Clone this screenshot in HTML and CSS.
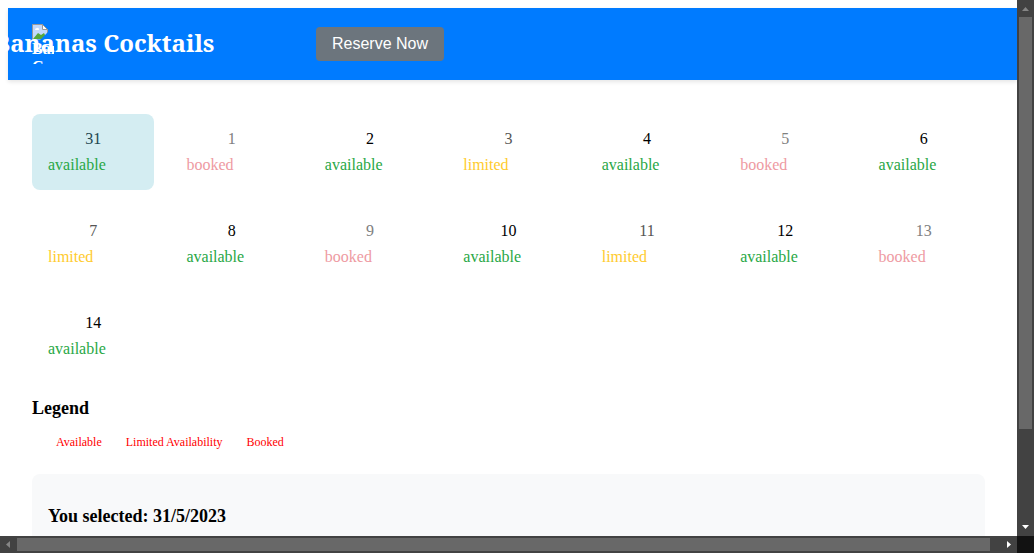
FILE: index.html
```html
<!DOCTYPE html>
<html lang="en">
<head>
<meta charset="utf-8">
<title>Bananas Cocktails</title>
<link rel="stylesheet" href="styles.css">
</head>
<body>
<div class="window">
  <div class="page">
    <header class="header">
      <div class="logo">
        <svg class="logo-icon" width="16" height="16" viewBox="0 0 16 16" aria-hidden="true">
          <path d="M.5.5h10l5 5v10H.5z" fill="#c3d9fb"/>
          <path d="M1 15l5-6 3 2 3-2 3 6z" fill="#55a83a"/>
          <path d="M3 6q0-2 2-2 2-1 2 2z" fill="#fff"/>
          <path d="M.5 15.5V.5h10l5 5v10" fill="none" stroke="#999"/>
          <path d="M10.500.5v5h5z" fill="#fff" stroke="#999"/>
          <path d="M8 16l8-8v8z" fill="#007bff"/>
        </svg>
        <span class="logo-alt">Bananas Cocktails</span>
      </div>
      <h1 class="title">Bananas Cocktails</h1>
      <button class="reserve" type="button">Reserve Now</button>
    </header>
    <main class="content">
      <div class="calendar">
        <div class="day selected"><span class="number">31</span><span class="status available">available</span></div>
        <div class="day is-booked"><span class="number">1</span><span class="status booked">booked</span></div>
        <div class="day"><span class="number">2</span><span class="status available">available</span></div>
        <div class="day is-limited"><span class="number">3</span><span class="status limited">limited</span></div>
        <div class="day"><span class="number">4</span><span class="status available">available</span></div>
        <div class="day is-booked"><span class="number">5</span><span class="status booked">booked</span></div>
        <div class="day"><span class="number">6</span><span class="status available">available</span></div>
        <div class="day is-limited"><span class="number">7</span><span class="status limited">limited</span></div>
        <div class="day"><span class="number">8</span><span class="status available">available</span></div>
        <div class="day is-booked"><span class="number">9</span><span class="status booked">booked</span></div>
        <div class="day"><span class="number">10</span><span class="status available">available</span></div>
        <div class="day is-limited"><span class="number">11</span><span class="status limited">limited</span></div>
        <div class="day"><span class="number">12</span><span class="status available">available</span></div>
        <div class="day is-booked"><span class="number">13</span><span class="status booked">booked</span></div>
        <div class="day"><span class="number">14</span><span class="status available">available</span></div>
      </div>
      <h3 class="heading">Legend</h3>
      <ul class="legend">
        <li>Available</li>
        <li>Limited Availability</li>
        <li>Booked</li>
      </ul>
      <section class="selection">
        <h3 class="heading">You selected: 31/5/2023</h3>
      </section>
    </main>
  </div>
  <div class="bar vertical" aria-hidden="true">
    <svg width="17" height="17" viewBox="0 0 17 17"><path d="M5 11h7L8.500 7z" fill="#858585"/></svg>
    <div class="track"><div class="thumb"></div></div>
    <svg width="17" height="17" viewBox="0 0 17 17"><path d="M5 6h7L8.500 10z" fill="#fff"/></svg>
  </div>
  <div class="bar horizontal" aria-hidden="true">
    <svg width="17" height="17" viewBox="0 0 17 17"><path d="M10 5v7L6 8.500z" fill="#858585"/></svg>
    <div class="track"><div class="thumb"></div></div>
    <svg width="17" height="17" viewBox="0 0 17 17"><path d="M7 5v7l4-3.500z" fill="#fff"/></svg>
  </div>
  <div class="corner"></div>
</div>
</body>
</html>
```
FILE: styles.css
```css
* { box-sizing: border-box; }
body {
  margin: 0;
  font-family: "Liberation Serif", "Times New Roman", serif;
  font-size: 16px;
  line-height: 18px;
  color: #000;
  background: #fff;
}
.window {
  display: grid;
  grid-template-columns: minmax(0, 1fr) 17px;
  grid-template-rows: minmax(0, 1fr) 17px;
  height: 100vh;
}
.page { overflow: hidden; padding: 8px 0 0 8px; }
.header {
  position: relative;
  display: flex;
  align-items: center;
  padding: 16px 24px;
  color: #fff;
  background: #007bff;
  box-shadow: 0 2px 4px rgba(0, 0, 0, 0.1);
}
.logo {
  width: 22px;
  height: 40px;
  overflow: hidden;
  font-weight: bold;
}
.logo-icon { display: block; }
.logo-alt { display: block; }
.title {
  position: absolute;
  top: 19px;
  left: -14px;
  margin: 0;
  font-family: "Noto Serif", "DejaVu Serif Condensed", "DejaVu Serif", serif;
  font-size: 24px;
  line-height: 32px;
  white-space: nowrap;
}
.reserve {
  margin-left: 262px;
  padding: 8px 16px;
  border: 0;
  border-radius: 4px;
  font: 16px/18px "Liberation Sans", Arial, sans-serif;
  color: #fff;
  background: #6c757d;
}
.content { padding: 34px 32px 0 24px; }
.calendar {
  display: grid;
  grid-template-columns: repeat(7, minmax(0, 1fr));
  gap: 16px;
}
.day {
  display: flex;
  flex-direction: column;
  gap: 8px;
  padding: 16px;
  border-radius: 8px;
}
.number { text-align: center; }
.selected { background: #d4edf2; }
.selected .number { color: #1c4650; }
.is-limited .number { color: #555; }
.is-booked .number { color: #808080; }
.available { color: #28a745; }
.limited { color: #ffcb2e; }
.booked { color: #ee9aa2; }
.heading { margin: 0; font-size: 18px; line-height: 20px; }
.calendar + .heading { margin-top: 24px; }
.legend {
  display: flex;
  gap: 24px;
  margin: 16px 0 24px;
  padding: 0 24px;
  list-style: none;
  font-size: 12px;
  line-height: 16px;
  color: #f00;
}
.selection {
  min-height: 100px;
  padding: 32px 16px;
  border-radius: 8px;
  background: #f8f9fa;
}
.bar { display: flex; background: #424242; }
.bar svg { display: block; flex: none; }
.track { flex: 1; display: flex; }
.thumb { background: #686868; }
.vertical { grid-column: 2; grid-row: 1; flex-direction: column; }
.vertical .track { padding: 0 2px; }
.vertical .thumb { width: 100%; height: 82%; }
.horizontal { grid-column: 1; grid-row: 2; }
.horizontal .track { padding: 2px 0; }
.horizontal .thumb { width: 99%; }
.corner { background: #121212; }
```
